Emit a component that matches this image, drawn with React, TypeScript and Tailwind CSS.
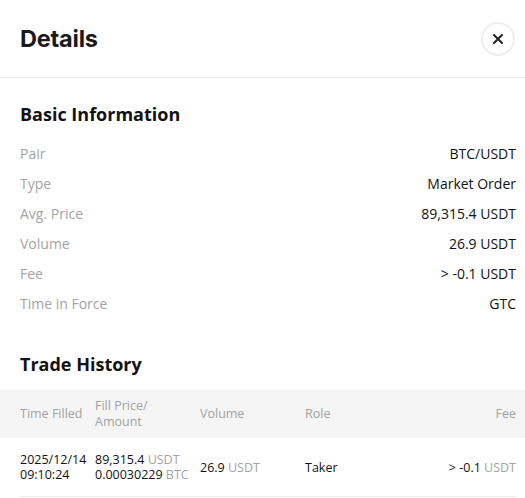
import React from "react";

interface InfoRow {
  label: string;
  value: string;
}

const basicInfo: InfoRow[] = [
  { label: "Pair", value: "BTC/USDT" },
  { label: "Type", value: "Market Order" },
  { label: "Avg. Price", value: "89,315.4 USDT" },
  { label: "Volume", value: "26.9 USDT" },
  { label: "Fee", value: "> -0.1 USDT" },
  { label: "Time in Force", value: "GTC" },
];

interface Fill {
  date: string;
  time: string;
  price: string;
  amount: string;
  volume: string;
  role: string;
  fee: string;
}

const fills: Fill[] = [
  {
    date: "2025/12/14",
    time: "09:10:24",
    price: "89,315.4",
    amount: "0.00030229",
    volume: "26.9",
    role: "Taker",
    fee: "> -0.1",
  },
];

function Unit({ children }: { children: React.ReactNode }) {
  return <span className="text-[#a3a3a3]">{children}</span>;
}

export default function App() {
  return (
    <div
      className="w-[525px] h-[498px] overflow-hidden bg-white text-[#121212]"
      style={{ fontFamily: '"Open Sans", "Noto Sans", sans-serif' }}
    >
      <div className="flex items-center justify-between h-[78px] pl-5 pr-[10px] border-b border-[#ececec]">
        <h1
          className="text-[23.5px] font-bold tracking-[-0.2px] text-[#1a1a1a]"
          style={{ fontFamily: 'Inter, "Liberation Sans", sans-serif' }}
        >
          Details
        </h1>
        <button className="w-[34px] h-[34px] rounded-full border-2 border-[#eeeeee] flex items-center justify-center">
          <svg width="12" height="12" viewBox="0 0 12 12" fill="none">
            <path d="M2 2L10 10M10 2L2 10" stroke="#222" strokeWidth="2" strokeLinecap="round" />
          </svg>
        </button>
      </div>

      <div className="pl-5 pr-[9px] pt-[23px]">
        <h2 className="text-[18px] font-bold leading-[26px] mb-[11px]">Basic Information</h2>
        <div className="flex flex-col">
          {basicInfo.map((row) => (
            <div key={row.label} className="flex justify-between items-center h-[30px] text-[14px]">
              <span className="text-[#a3a3a3]">{row.label}</span>
              <span>{row.value}</span>
            </div>
          ))}
        </div>

        <h2 className="text-[18px] font-bold leading-[26px] mt-[33px] mb-[13px]">Trade History</h2>
      </div>

      <div className="bg-[#f5f5f5] h-[48px] flex items-center pl-5 pr-[9px] text-[12.5px] leading-[16px] text-[#a3a3a3]">
        <div className="w-[75px]">Time Filled</div>
        <div className="w-[105px]">
          Fill Price/
          <br />
          Amount
        </div>
        <div className="w-[105px]">Volume</div>
        <div className="w-[105px]">Role</div>
        <div className="flex-1 text-right">Fee</div>
      </div>

      <div className="pl-5 pr-[9px]">
        {fills.map((f, i) => (
          <div
            key={i}
            className="flex items-center h-[59px] border-b border-[#ececec] text-[12.5px] leading-[15px]"
          >
            <div className="w-[75px] shrink-0">
              <div>{f.date}</div>
              <div>{f.time}</div>
            </div>
            <div className="w-[105px] shrink-0">
              <div>
                {f.price} <Unit>USDT</Unit>
              </div>
              <div>
                {f.amount} <Unit>BTC</Unit>
              </div>
            </div>
            <div className="w-[105px]">
              {f.volume} <Unit>USDT</Unit>
            </div>
            <div className="w-[105px]">{f.role}</div>
            <div className="flex-1 text-right">
              {f.fee} <Unit>USDT</Unit>
            </div>
          </div>
        ))}
      </div>
    </div>
  );
}
